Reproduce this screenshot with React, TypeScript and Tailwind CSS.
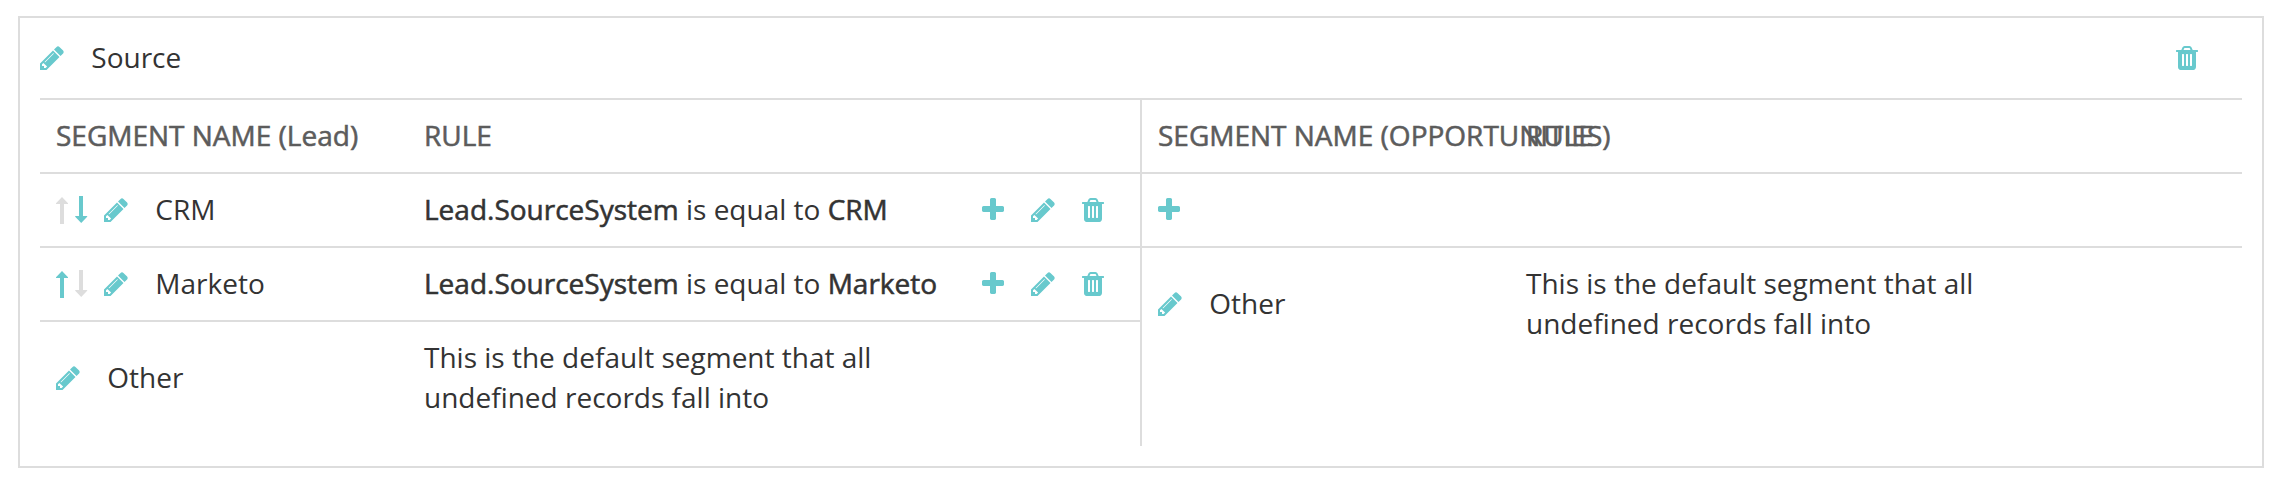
import type { ReactNode } from "react";

function PencilIcon() {
  return (
    <svg viewBox="128 128 1536 1536" className="h-6 w-6 shrink-0 fill-[#68c9cd]">
      <path d="M491 1536l91-91-235-235-91 91v107h128v128h107zm523-928q0-22-22-22-10 0-17 7l-542 542q-7 7-7 17 0 22 22 22 10 0 17-7l542-542q7-7 7-17zm-54-192l416 416-832 832h-416v-416zm683 96q0 53-37 90l-166 166-416-416 166-165q36-38 90-38 53 0 91 38l235 234q37 39 37 91z" />
    </svg>
  );
}

function PlusIcon() {
  return (
    <svg viewBox="192 128 1408 1536" className="h-6 w-[22px] shrink-0 fill-[#68c9cd]">
      <path d="M1600 736v192q0 40-28 68t-68 28h-416v416q0 40-28 68t-68 28h-192q-40 0-68-28t-28-68v-416h-416q-40 0-68-28t-28-68v-192q0-40 28-68t68-28h416v-416q0-40 28-68t68-28h192q40 0 68 28t28 68v416h416q40 0 68 28t28 68z" />
    </svg>
  );
}

function TrashIcon() {
  return (
    <svg viewBox="192 128 1408 1536" className="h-6 w-[22px] shrink-0 fill-[#68c9cd]">
      <path d="M704 1376v-704q0-14-9-23t-23-9h-64q-14 0-23 9t-9 23v704q0 14 9 23t23 9h64q14 0 23-9t9-23zm256 0v-704q0-14-9-23t-23-9h-64q-14 0-23 9t-9 23v704q0 14 9 23t23 9h64q14 0 23-9t9-23zm256 0v-704q0-14-9-23t-23-9h-64q-14 0-23 9t-9 23v704q0 14 9 23t23 9h64q14 0 23-9t9-23zm-544-992h448l-48-117q-7-9-17-11h-317q-10 2-17 11zm928 32v64q0 14-9 23t-23 9h-96v948q0 83-47 143.5t-113 60.5h-832q-66 0-113-58.5t-47-141.5v-952h-96q-14 0-23-9t-9-23v-64q0-14 9-23t23-9h309l70-167q15-37 54-63t79-26h320q40 0 79 26t54 63l70 167h309q14 0 23 9t9 23z" />
    </svg>
  );
}

function MoveArrows({ up, down }: { up: boolean; down: boolean }) {
  return (
    <svg viewBox="0 0 32 28" className="mr-4 h-7 w-8 shrink-0">
      <path className={up ? "fill-[#68c9cd]" : "fill-[#dddddd]"} d="M6 1L12 7.3V8H8V28H4V8H0V7.3Z" />
      <path className={down ? "fill-[#68c9cd]" : "fill-[#dddddd]"} d="M23 0H27V20H31.2V20.7L25.2 27L19.2 20.7V20H23Z" />
    </svg>
  );
}

function Heading({ children }: { children: ReactNode }) {
  return (
    <span className="whitespace-nowrap pb-0.5 text-[#5c5c5c] [-webkit-text-stroke:0.55px_#5c5c5c]">{children}</span>
  );
}

function Strong({ children }: { children: ReactNode }) {
  return <span className="[-webkit-text-stroke:0.55px_#333333]">{children}</span>;
}

function Label({ children }: { children: ReactNode }) {
  return <span className="flex-1 pb-0.5 pl-[27.3px]">{children}</span>;
}

type RowProps = { name: ReactNode; rule?: ReactNode; actions?: boolean; last?: boolean };

function Row({ name, rule, actions, last }: RowProps) {
  return (
    <div className={last ? "flex items-center py-4 pl-4" : "flex items-center border-b-2 border-[#dddddd] py-4 pl-4"}>
      <div className="flex h-10 w-[368px] shrink-0 items-center">{name}</div>
      <div className="-mt-px mb-px min-h-10 w-[557.5px] shrink-0">{rule}</div>
      {actions && (
        <div className="flex items-center">
          <PlusIcon />
          <div className="ml-[27px] mr-[27.5px] flex">
            <PencilIcon />
          </div>
          <TrashIcon />
        </div>
      )}
    </div>
  );
}

const defaultRule = (
  <>
    This is the default segment that all
    <br />
    undefined records fall into
  </>
);

const defaultName = (
  <>
    <PencilIcon />
    <Label>Other</Label>
  </>
);

function LeadRow({ name, up, down }: { name: string; up: boolean; down: boolean }) {
  return (
    <Row
      actions
      name={
        <>
          <MoveArrows up={up} down={down} />
          <PencilIcon />
          <Label>{name}</Label>
        </>
      }
      rule={
        <>
          <Strong>Lead.SourceSystem</Strong> is equal to <Strong>{name}</Strong>
        </>
      }
    />
  );
}

export default function App() {
  return (
    <div className="h-[484px] w-[2286px] bg-white pl-[18px] pt-4 font-['Open_Sans',sans-serif] text-[28px] leading-10 text-[#333333]">
      <section className="h-[452px] w-[2246px] border-2 border-[#dddddd] px-5">
        <header className="flex h-[82px] items-center border-b-2 border-[#dddddd] pr-11">
          <PencilIcon />
          <Label>Source</Label>
          <TrashIcon />
        </header>
        <div className="flex h-[346px]">
          <div className="w-[1100px]">
            <Row name={<Heading>SEGMENT NAME (Lead)</Heading>} rule={<Heading>RULE</Heading>} />
            <LeadRow name="CRM" up={false} down />
            <LeadRow name="Marketo" up down={false} />
            <Row name={defaultName} rule={defaultRule} last />
          </div>
          <div className="flex-1 border-l-2 border-[#dddddd]">
            <Row name={<Heading>SEGMENT NAME (OPPORTUNITIES)</Heading>} rule={<Heading>RULE</Heading>} />
            <Row name={<PlusIcon />} />
            <Row name={defaultName} rule={defaultRule} last />
          </div>
        </div>
      </section>
    </div>
  );
}
